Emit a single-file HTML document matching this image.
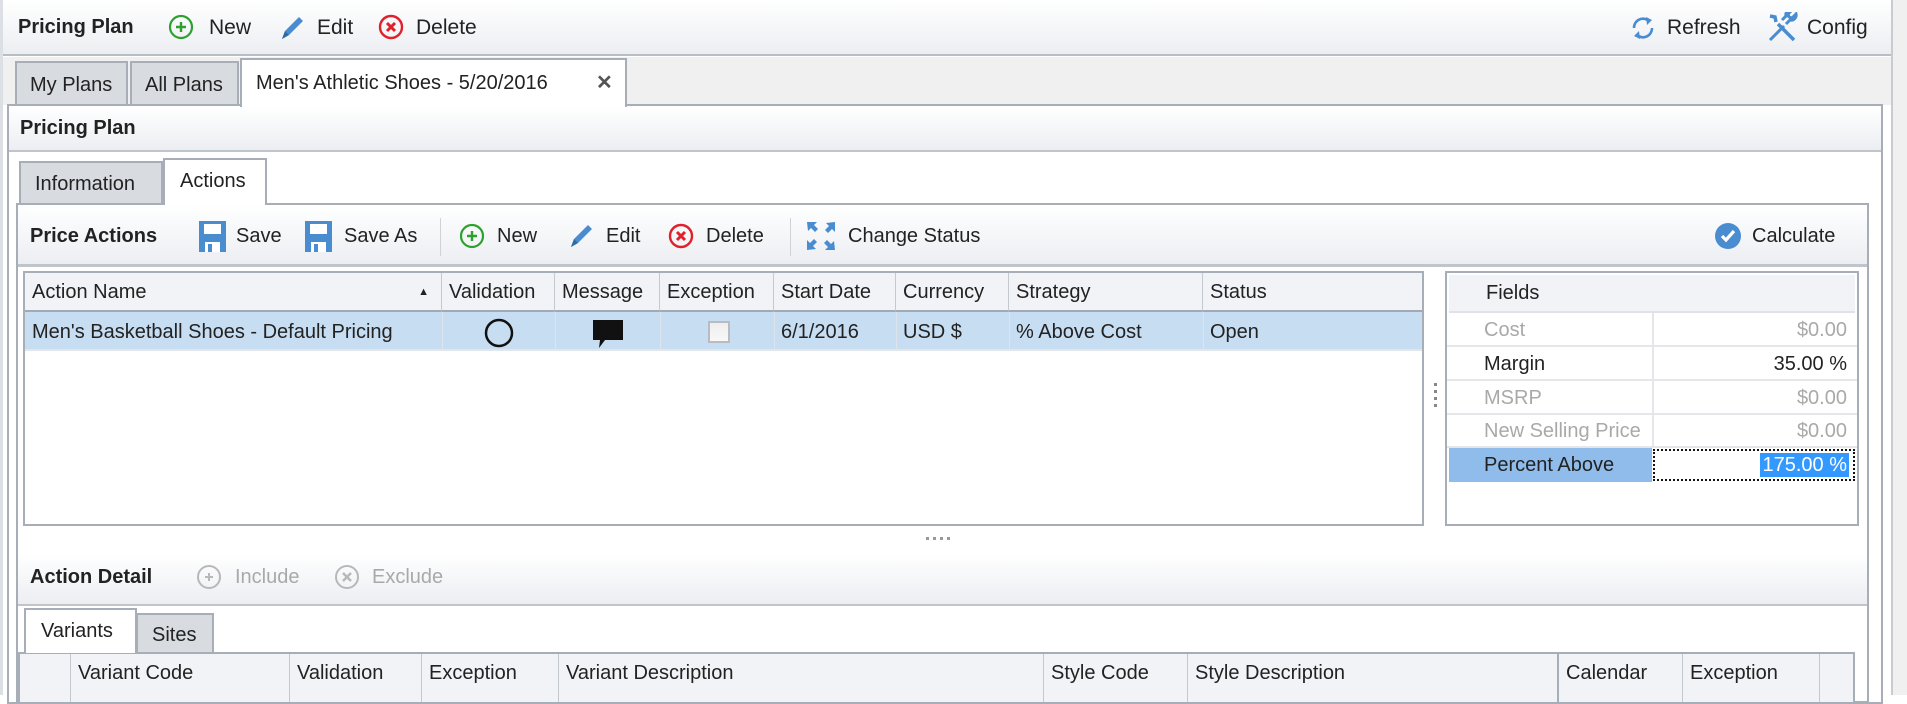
<!DOCTYPE html>
<html><head><meta charset="utf-8"><style>
*{box-sizing:border-box;margin:0;padding:0}
body{width:1907px;height:695px;overflow:hidden;background:#fff;font-family:"Liberation Sans",sans-serif;font-size:20px;color:#222;position:relative}
.a{position:absolute;white-space:nowrap}
.grad{background:linear-gradient(#fff,#eceef2)}
.b{font-weight:bold}
.ic{position:absolute}
.gh{position:absolute;background:#f1f3f6;border-bottom:2px solid #a3a9b2;border-right:1px solid #c4c9d0;height:39px;line-height:38px;padding-left:7px;white-space:nowrap;overflow:hidden}
.gc{position:absolute;line-height:40px;padding-left:7px;white-space:nowrap}
.fr{position:absolute;left:0;width:100%;border-bottom:2px solid #e4e6ea}
.gray{color:#a9a9a9}
</style></head><body>
<div class="a" style="left:1891px;top:0;width:16px;height:695px;background:#f0f0f0;border-left:2px solid #c8ccd2"></div>
<div class="a" style="left:0;top:0;width:3px;height:695px;background:#dcdfe3"></div>
<div class="a grad" style="left:3px;top:0;width:1888px;height:56px;border-bottom:2px solid #b9bec6"></div>
<div class="a b" style="left:18px;top:16px;font-size:20px">Pricing Plan</div>
<svg class="ic" style="left:168px;top:14px" width="26" height="26"><circle cx="13" cy="13" r="11" fill="none" stroke="#2ea02e" stroke-width="2.2"/><path d="M13 8v10M8 13h10" stroke="#2ea02e" stroke-width="2.4"/></svg>
<div class="a" style="left:209px;top:16px;font-size:21px">New</div>
<svg class="ic" style="left:278px;top:12px" width="28" height="30"><path d="M4 27l3-8L21 5l4 4L11 23z" fill="#4a8cd0"/><path d="M4 27l3-8 4 4z" fill="#2e6aa8"/></svg>
<div class="a" style="left:317px;top:16px;font-size:21px">Edit</div>
<svg class="ic" style="left:378px;top:14px" width="26" height="26"><circle cx="13" cy="13" r="11" fill="none" stroke="#e0202a" stroke-width="2.4"/><path d="M9 9l8 8M17 9l-8 8" stroke="#e0202a" stroke-width="3"/></svg>
<div class="a" style="left:416px;top:16px;font-size:21px">Delete</div>
<svg class="ic" style="left:1630px;top:15px" width="26" height="26"><path d="M4 13a9 9 0 0 1 15-7" fill="none" stroke="#4a8cd0" stroke-width="2.6"/><path d="M22 13a9 9 0 0 1-15 7" fill="none" stroke="#4a8cd0" stroke-width="2.6"/><path d="M16 2l6 3-5 5z" fill="#4a8cd0"/><path d="M10 24l-6-3 5-5z" fill="#4a8cd0"/></svg>
<div class="a" style="left:1667px;top:16px;font-size:21px">Refresh</div>
<svg class="ic" style="left:1766px;top:12px" width="32" height="32"><path d="M4 28L18 14M20 12l4-4a5 5 0 0 0 6-6l-4 4-3-1-1-3 4-4a5 5 0 0 0-6 6l-4 4" stroke="#4a8cd0" stroke-width="3" fill="none"/><path d="M28 28L12 12M4 4l5 1 1 5" stroke="#4a8cd0" stroke-width="3.5" fill="none"/></svg>
<div class="a" style="left:1807px;top:16px;font-size:21px">Config</div>
<div class="a" style="left:3px;top:57px;width:1888px;height:48px;background:#f0f0f0"></div>
<div class="a" style="left:15px;top:61px;width:113px;height:44px;background:#d8dbe0;border:2px solid #a8aeb7;border-bottom:none;line-height:44px;padding-left:13px">My Plans</div>
<div class="a" style="left:130px;top:61px;width:109px;height:44px;background:#d8dbe0;border:2px solid #a8aeb7;border-bottom:none;line-height:44px;padding-left:13px">All Plans</div>
<div class="a" style="left:240px;top:58px;width:387px;height:49px;background:#fff;border:2px solid #a8aeb7;border-bottom:none;line-height:46px;padding-left:14px;z-index:2">Men's Athletic Shoes - 5/20/2016<span style="position:absolute;left:354px;font-weight:bold;color:#555">✕</span></div>
<div class="a" style="left:7px;top:104px;width:1876px;height:600px;border:2px solid #a8aeb7;background:#fff"></div>
<div class="a grad" style="left:9px;top:106px;width:1872px;height:46px;border-bottom:2px solid #c0c5cc"></div>
<div class="a b" style="left:20px;top:117px">Pricing Plan</div>
<div class="a" style="left:19px;top:161px;width:144px;height:42px;background:#d8dbe0;border:2px solid #a8aeb7;border-bottom:none;line-height:42px;padding-left:14px">Information</div>
<div class="a" style="left:163px;top:158px;width:104px;height:47px;background:#fff;border:2px solid #a8aeb7;border-bottom:none;line-height:42px;padding-left:15px;z-index:2">Actions</div>
<div class="a" style="left:16px;top:203px;width:1853px;height:500px;border:2px solid #a8aeb7;background:#fff"></div>
<div class="a grad" style="left:18px;top:205px;width:1849px;height:62px;border-bottom:3px solid #c0c5cc"></div>
<div class="a b" style="left:30px;top:225px">Price Actions</div>
<svg class="ic" style="left:198px;top:220px" width="29" height="32"><path d="M1 1h27v31H1z" fill="#4a8cd0"/><path d="M6 4h17v10H6z" fill="#fff"/><path d="M7 22h15v10H7z" fill="#fff"/><path d="M10 24h4v8h-4z" fill="#4a8cd0"/></svg>
<div class="a" style="left:236px;top:225px">Save</div>
<svg class="ic" style="left:304px;top:220px" width="29" height="32"><path d="M1 1h27v31H1z" fill="#4a8cd0"/><path d="M6 4h17v10H6z" fill="#fff"/><path d="M7 22h15v10H7z" fill="#fff"/><path d="M10 24h4v8h-4z" fill="#4a8cd0"/></svg>
<div class="a" style="left:344px;top:225px">Save As</div>
<div class="a" style="left:440px;top:218px;width:1px;height:38px;background:#cfd3d8"></div>
<svg class="ic" style="left:459px;top:223px" width="26" height="26"><circle cx="13" cy="13" r="11" fill="none" stroke="#2ea02e" stroke-width="2.2"/><path d="M13 8v10M8 13h10" stroke="#2ea02e" stroke-width="2.4"/></svg>
<div class="a" style="left:497px;top:225px">New</div>
<svg class="ic" style="left:567px;top:220px" width="28" height="30"><path d="M4 27l3-8L21 5l4 4L11 23z" fill="#4a8cd0"/><path d="M4 27l3-8 4 4z" fill="#2e6aa8"/></svg>
<div class="a" style="left:606px;top:225px">Edit</div>
<svg class="ic" style="left:668px;top:223px" width="26" height="26"><circle cx="13" cy="13" r="11" fill="none" stroke="#e0202a" stroke-width="2.4"/><path d="M9 9l8 8M17 9l-8 8" stroke="#e0202a" stroke-width="3"/></svg>
<div class="a" style="left:706px;top:225px">Delete</div>
<div class="a" style="left:790px;top:218px;width:1px;height:38px;background:#cfd3d8"></div>
<svg class="ic" style="left:806px;top:221px" width="30" height="30"><g fill="#4a8cd0"><path d="M1 1h10l-3 3 4 4-3 3-4-4-3 3z"/><path d="M29 1v10l-3-3-4 4-3-3 4-4-3-3z"/><path d="M1 29V19l3 3 4-4 3 3-4 4 3 3z"/><path d="M29 29H19l3-3-4-4 3-3 4 4 3-3z"/></g></svg>
<div class="a" style="left:848px;top:225px">Change Status</div>
<svg class="ic" style="left:1714px;top:222px" width="28" height="28"><circle cx="14" cy="14" r="13" fill="#4a8cd0"/><path d="M8 14l4 4 8-9" stroke="#fff" stroke-width="3.2" fill="none"/></svg>
<div class="a" style="left:1752px;top:225px">Calculate</div>
<div class="a" style="left:23px;top:271px;width:1401px;height:255px;border:2px solid #a8aeb7;overflow:hidden">
 <div class="gh" style="left:0;width:417px">Action Name<span style="position:absolute;right:12px;font-size:11px">▲</span></div>
 <div class="gh" style="left:417px;width:113px">Validation</div>
 <div class="gh" style="left:530px;width:105px">Message</div>
 <div class="gh" style="left:635px;width:114px">Exception</div>
 <div class="gh" style="left:749px;width:122px">Start Date</div>
 <div class="gh" style="left:871px;width:113px">Currency</div>
 <div class="gh" style="left:984px;width:194px">Strategy</div>
 <div class="gh" style="left:1178px;width:230px;border-right:none">Status</div>
 <div class="a" style="left:0;top:39px;width:1400px;height:39px;background:#c7ddf2;border-bottom:2px solid #e2e5e9"></div>
 <div class="gc" style="left:0;top:39px">Men's Basketball Shoes - Default Pricing</div>
 <div class="a" style="left:417px;top:39px;width:1px;height:39px;background:#dde4ec"></div>
 <div class="a" style="left:530px;top:39px;width:1px;height:39px;background:#dde4ec"></div>
 <div class="a" style="left:635px;top:39px;width:1px;height:39px;background:#dde4ec"></div>
 <div class="a" style="left:749px;top:39px;width:1px;height:39px;background:#dde4ec"></div>
 <div class="a" style="left:871px;top:39px;width:1px;height:39px;background:#dde4ec"></div>
 <div class="a" style="left:984px;top:39px;width:1px;height:39px;background:#dde4ec"></div>
 <div class="a" style="left:1178px;top:39px;width:1px;height:39px;background:#dde4ec"></div>
 <svg class="ic" style="left:459px;top:45px" width="30" height="30"><circle cx="15" cy="15" r="13" fill="none" stroke="#111" stroke-width="2.5"/></svg>
 <svg class="ic" style="left:566px;top:45px" width="34" height="32"><path d="M2 2h30v20H14l-6 8 1-8H2z" fill="#111"/></svg>
 <div class="a" style="left:683px;top:48px;width:22px;height:22px;border:2px solid #b8bcc2;background:linear-gradient(#eee,#f8f8f8)"></div>
 <div class="gc" style="left:749px;top:39px">6/1/2016</div>
 <div class="gc" style="left:871px;top:39px">USD $</div>
 <div class="gc" style="left:984px;top:39px">% Above Cost</div>
 <div class="gc" style="left:1178px;top:39px">Open</div>
</div>
<div class="a" style="left:1434px;top:383px;width:3px;height:27px;background:repeating-linear-gradient(#888 0 3px,transparent 3px 7px)"></div>
<div class="a" style="left:926px;top:537px;width:27px;height:3px;background:repeating-linear-gradient(90deg,#999 0 3px,transparent 3px 7px)"></div>
<div class="a" style="left:1445px;top:271px;width:414px;height:255px;border:2px solid #a8aeb7;background:#fff">
 <div class="a" style="left:2px;top:2px;width:406px;height:38px;background:#f1f3f6;border-bottom:2px solid #dfe2e6;line-height:36px;padding-left:37px">Fields</div>
 <div class="fr" style="top:40px;height:34px"></div><div class="fr" style="top:74px;height:34px"></div><div class="fr" style="top:108px;height:34px"></div><div class="fr" style="top:142px;height:33px"></div>
 <div class="a" style="left:2px;top:175px;width:203px;height:34px;background:#8fbcea"></div>
 <div class="a" style="left:205px;top:40px;width:2px;height:135px;background:#e4e6ea"></div>
 <div class="a gray" style="left:37px;top:46px">Cost</div><div class="a gray" style="right:10px;top:46px">$0.00</div>
 <div class="a" style="left:37px;top:80px">Margin</div><div class="a" style="right:10px;top:80px">35.00 %</div>
 <div class="a gray" style="left:37px;top:114px">MSRP</div><div class="a gray" style="right:10px;top:114px">$0.00</div>
 <div class="a gray" style="left:37px;top:147px">New Selling Price</div><div class="a gray" style="right:10px;top:147px">$0.00</div>
 <div class="a" style="left:37px;top:181px">Percent Above</div>
 <div class="a" style="left:206px;top:176px;width:202px;height:32px;border:2px dotted #111"></div>
 <div class="a" style="right:8px;top:180px;background:#3399ff;color:#fff;padding:0 2px;line-height:24px">175.00 %</div>
</div>
<div class="a" style="left:18px;top:553px;width:1849px;height:53px;background:linear-gradient(#fff,#eceef2);border-bottom:2px solid #c0c5cc"></div>
<div class="a b" style="left:30px;top:566px">Action Detail</div>
<svg class="ic" style="left:196px;top:564px" width="26" height="26"><circle cx="13" cy="13" r="11" fill="none" stroke="#b8b8b8" stroke-width="2"/><path d="M13 9v8M9 13h8" stroke="#b8b8b8" stroke-width="2"/></svg>
<div class="a" style="left:235px;top:566px;color:#a9a9a9">Include</div>
<svg class="ic" style="left:334px;top:564px" width="26" height="26"><circle cx="13" cy="13" r="11" fill="none" stroke="#b8b8b8" stroke-width="2"/><path d="M9 9l8 8M17 9l-8 8" stroke="#b8b8b8" stroke-width="2.4"/></svg>
<div class="a" style="left:372px;top:566px;color:#a9a9a9">Exclude</div>
<div class="a" style="left:24px;top:608px;width:113px;height:45px;background:#fff;border:2px solid #a8aeb7;border-bottom:none;line-height:42px;padding-left:15px;z-index:2">Variants</div>
<div class="a" style="left:136px;top:613px;width:78px;height:40px;background:#d8dbe0;border:2px solid #a8aeb7;border-bottom:none;line-height:40px;padding-left:14px">Sites</div>
<div class="a" style="left:18px;top:652px;width:1837px;height:50px;border:2px solid #a8aeb7;border-bottom:none;background:#f1f3f6;overflow:hidden">
 <div class="gh" style="left:0;width:51px;height:50px"></div>
 <div class="gh" style="left:51px;width:219px;height:50px">Variant Code</div>
 <div class="gh" style="left:270px;width:132px;height:50px">Validation</div>
 <div class="gh" style="left:402px;width:137px;height:50px">Exception</div>
 <div class="gh" style="left:539px;width:485px;height:50px">Variant Description</div>
 <div class="gh" style="left:1024px;width:144px;height:50px">Style Code</div>
 <div class="gh" style="left:1168px;width:371px;height:50px;border-right:2px solid #a8aeb7">Style Description</div>
 <div class="gh" style="left:1539px;width:124px;height:50px">Calendar</div>
 <div class="gh" style="left:1663px;width:137px;height:50px">Exception</div>
 <div class="gh" style="left:1800px;width:37px;height:50px"></div>
</div>
</body></html>
